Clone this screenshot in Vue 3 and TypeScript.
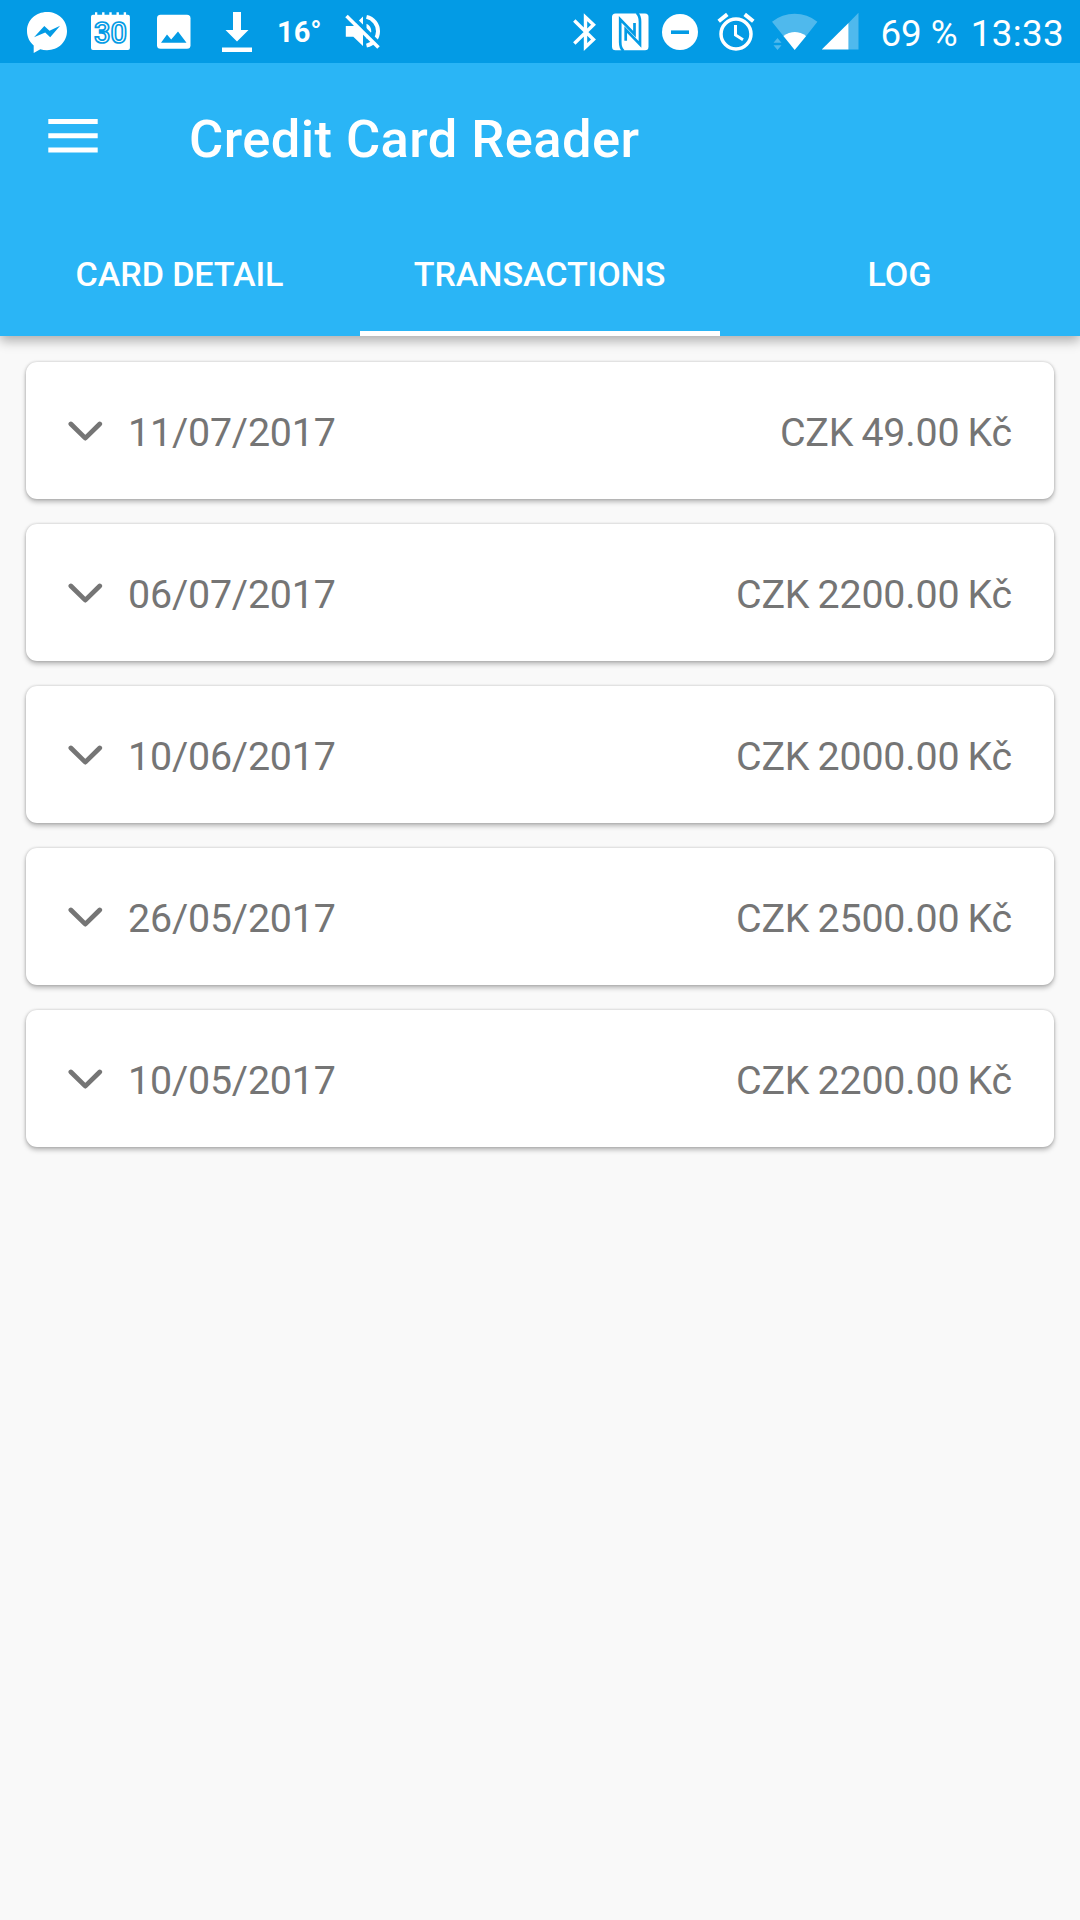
<script setup lang="ts">
interface Transaction {
  date: string
  amount: string
}

const tabs: string[] = ['CARD DETAIL', 'TRANSACTIONS', 'LOG']
const activeTab = 'TRANSACTIONS'

const transactions: Transaction[] = [
  { date: '11/07/2017', amount: 'CZK 49.00 Kč' },
  { date: '06/07/2017', amount: 'CZK 2200.00 Kč' },
  { date: '10/06/2017', amount: 'CZK 2000.00 Kč' },
  { date: '26/05/2017', amount: 'CZK 2500.00 Kč' },
  { date: '10/05/2017', amount: 'CZK 2200.00 Kč' },
]
</script>

<template>
  <div class="screen">
    <header class="header">
      <div class="status">
        <div class="group">
          <svg class="messenger" width="40" height="63" viewBox="27 0 40 63">
            <path fill="#fff" d="M47 12c-11.300 0-20 8.300-20 19 0 6 2.600 11 6.700 14.500v7.500l6.600-3.700c2.100.600 4.400.900 6.700.900 11.300 0 20-8.300 20-19.200S58.300 12 47 12z" />
            <path fill="#039be5" d="M34 37.200 44.300 26l5.200 4.700 10.600-5-9.900 11.500-5-4.800z" />
          </svg>
          <svg class="calendar" width="39" height="63" viewBox="91 0 39 63">
            <path fill="#fff" d="M93 14.800h2V12.300h2.300v2.500h4.800V12.300h2.400v2.500h4.800V12.300h2.400v2.500h4.800V12.300h2.400v2.500h4.800V12.300h2.400v2.500h1.800a2 2 0 0 1 2 2V48a2 2 0 0 1-2 2H93a2 2 0 0 1-2-2V16.800a2 2 0 0 1 2-2z" />
            <text class="day" x="94" y="43.200" textLength="33" lengthAdjust="spacingAndGlyphs">30</text>
          </svg>
          <svg class="photo" width="34" height="63" viewBox="157 0 34 63">
            <rect x="157" y="14.700" width="33.500" height="34" rx="3.500" fill="#fff" />
            <path fill="#039be5" d="m161 42.800 6-8.300 4.200 5 6.800-8 8.500 11.300z" />
          </svg>
          <svg class="download" width="30" height="63" viewBox="222 0 30 63">
            <path fill="#fff" d="M233 12h8v18h7.500L237 41.500 225.500 30h7.500zM222 47.500h30V52h-30z" />
          </svg>
          <span class="temp">16°</span>
          <svg class="mute" width="36" height="63" viewBox="345 0 36 63">
            <path fill="#fff" d="M345.800 26h7.500l9.700-9.500V46l-9.700-9.300h-7.500z" />
            <path fill="none" stroke="#fff" stroke-width="4" d="M366.500 16.900a14.700 14.700 0 0 1 0 28.700" />
            <path fill="#fff" d="M366.500 23.800a8.300 8.300 0 0 1 0 15z" />
            <path stroke="#039be5" stroke-width="4" d="m349.500 14 31 31" />
            <path stroke="#fff" stroke-width="3.500" d="m346.500 16 32 31.500" />
          </svg>
        </div>
        <div class="group">
          <svg width="24" height="63" viewBox="573 0 24 63">
            <path fill="none" stroke="#fff" stroke-width="3.400" d="m574.300 20.500 19.200 19-8 7.600V17.200l8 7.500-19.200 18.800" />
          </svg>
          <svg class="nfc" width="37" height="63" viewBox="612 0 37 63">
            <rect x="612" y="13.500" width="36.500" height="36.800" rx="3.500" fill="#fff" />
            <path fill="none" stroke="#039be5" stroke-width="2.700" d="M623.500 51c-2.300-2-3.300-4.500-3.300-9V19.300l14.300 14.900V23M636.700 12.800c2.300 2 3.300 4.500 3.300 9v22.700L625.700 29.600v11.200" />
          </svg>
          <svg class="dnd" width="36" height="63" viewBox="662 0 36 63">
            <circle cx="680" cy="32" r="18" fill="#fff" />
            <path fill="#039be5" d="M671 30.400h18v3.600h-18z" />
          </svg>
          <svg class="alarm" width="38" height="63" viewBox="717 0 38 63">
            <circle cx="736" cy="34" r="15" fill="none" stroke="#fff" stroke-width="3.500" />
            <path fill="none" stroke="#fff" stroke-width="3" d="M735.500 25v10l7.500 4.700" />
            <path stroke="#fff" stroke-width="4" d="m718.700 21.300 8.600-6.900M744.700 14.400l8.600 6.900" />
          </svg>
          <svg class="wifi" width="46" height="63" viewBox="772 0 46 63">
            <path fill="#fff" fill-opacity=".3" d="M772 21.800a36 36 0 0 1 45.400 0L806.200 36a18.500 18.500 0 0 0-22.800 0zM777.500 38l4 4.800h-8zM773.500 45.200h8l-4 4.800z" />
            <path fill="#fff" d="M783.400 36a18.500 18.500 0 0 1 22.800 0l-11.500 14z" />
          </svg>
          <svg class="signal" width="37" height="63" viewBox="822 0 37 63">
            <path fill="#fff" fill-opacity=".3" d="M848.500 23 858.500 12.800V49.500h-10z" />
            <path fill="#fff" d="M821.800 49.500 848.500 23v26.500z" />
          </svg>
          <span class="battery">69 %</span>
          <span class="clock">13:33</span>
        </div>
      </div>
      <div class="toolbar">
        <svg width="50" height="37" viewBox="0 0 50 37">
          <path fill="#fff" d="M.3 1h49.400v5.100H.3zM.3 15.200h49.400v5.100H.3zM.3 29.500h49.400v5.100H.3z" />
        </svg>
        <h1>Credit Card Reader</h1>
      </div>
      <nav class="tabs">
        <div v-for="tab in tabs" :key="tab" class="tab" :class="{ active: tab === activeTab }">{{ tab }}</div>
      </nav>
    </header>
    <main class="list">
      <article v-for="item in transactions" :key="item.date" class="card">
        <svg width="36" height="22" viewBox="0 0 36 22">
          <path fill="none" stroke="#757575" stroke-width="4.800" stroke-linecap="round" stroke-linejoin="round" d="m3.900 4 14.400 14.100L32.700 4" />
        </svg>
        <span class="date">{{ item.date }}</span>
        <span class="amount">{{ item.amount }}</span>
      </article>
    </main>
  </div>
</template>

<style>
body {
  background: #f9f9f9;
}
</style>

<style scoped>
.screen {
  width: 1080px;
  height: 1920px;
  overflow: hidden;
  background: #f9f9f9;
  font-family: Roboto, "Noto Sans", sans-serif;
}
svg {
  display: block;
  flex: none;
}
.header {
  height: 336px;
  background: #2ab5f6;
  color: #fff;
  box-shadow: 0 5px 11px rgba(0, 0, 0, 0.3);
}
.status {
  display: flex;
  justify-content: space-between;
  box-sizing: border-box;
  height: 63px;
  padding: 0 16px 0 27px;
  background: #039be5;
}
.group {
  display: flex;
  line-height: 67px;
  white-space: nowrap;
}
.calendar { margin-left: 24px; }
.photo { margin-left: 27px; }
.download { margin-left: 31px; }
.temp {
  width: 68px;
  margin-left: 25px;
  font-size: 29px;
  font-weight: 700;
  line-height: 64px;
}
.day {
  fill: #fff;
  stroke: #039be5;
  stroke-width: 1.7px;
  font-size: 29px;
  font-weight: 500;
}
.nfc { margin-left: 15px; }
.dnd { margin-left: 13px; }
.alarm { margin-left: 19px; }
.wifi { margin-left: 17px; }
.signal { margin-left: 4px; }
.battery {
  margin-left: 21.700px;
  font-size: 36.750px;
}
.clock {
  margin-left: 13px;
  font-size: 36.750px;
  letter-spacing: 0.35px;
}
.toolbar {
  display: flex;
  align-items: center;
  height: 147px;
  padding-left: 48px;
}
h1 {
  margin: 4px 0 0 91px;
  font-size: 52.500px;
  font-weight: 500;
  line-height: 62px;
  letter-spacing: 0.42px;
}
.tabs {
  display: flex;
  height: 126px;
}
.tab {
  flex: 1;
  box-sizing: border-box;
  height: 126px;
  padding-right: 1px;
  border-bottom: 5px solid transparent;
  font-size: 34.125px;
  font-weight: 500;
  line-height: 128px;
  letter-spacing: -0.1px;
  text-align: center;
}
.active {
  border-bottom-color: #fff;
}
.list {
  display: flex;
  flex-direction: column;
  gap: 25px;
  padding: 26px;
}
.card {
  display: flex;
  align-items: center;
  box-sizing: border-box;
  height: 137px;
  padding: 0 42px 0 41px;
  border-radius: 11px;
  background: #fff;
  box-shadow: 0 3px 5px rgba(0, 0, 0, 0.26), 0 0 3px rgba(0, 0, 0, 0.2);
  color: #757575;
  font-size: 39.375px;
  line-height: 46px;
  letter-spacing: -0.18px;
}
.date {
  margin: 4px 0 0 25px;
}
.amount {
  margin: 4px 0 0 auto;
  word-spacing: -1.4px;
}
</style>
